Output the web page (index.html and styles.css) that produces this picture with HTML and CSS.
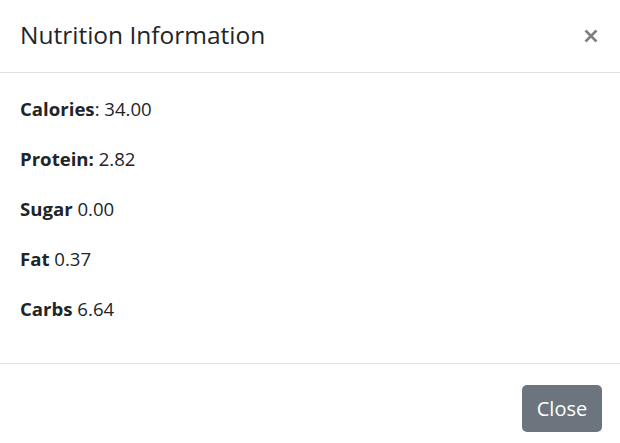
FILE: index.html
```html
<!DOCTYPE html>
<html>
<head>
<meta charset="utf-8">
<link rel="stylesheet" href="styles.css">
</head>
<body>
<div class="modal">
  <div class="modal-header">
    <h5 class="modal-title">Nutrition Information</h5>
    <button class="close" aria-label="Close">
      <svg width="14" height="14" viewBox="0 0 14 14"><path d="M1.5 1.5 L12.5 12.5 M12.5 1.5 L1.5 12.5" stroke="#808080" stroke-width="2.6" stroke-linecap="butt"/></svg>
    </button>
  </div>
  <div class="modal-body">
    <p><b>Calories</b>: 34.00</p>
    <p><b>Protein:</b> 2.82</p>
    <p><b>Sugar</b> 0.00</p>
    <p><b>Fat</b> 0.37</p>
    <p><b>Carbs</b> 6.64</p>
  </div>
  <div class="modal-footer">
    <button class="btn">Close</button>
  </div>
</div>
</body>
</html>
```
FILE: styles.css
```css
html, body {
  margin: 0;
  background: #fff;
}
body {
  font-family: "Open Sans", "Noto Sans", sans-serif;
  color: #212529;
  font-size: 18.6px;
  line-height: 30px;
}
.modal-header {
  height: 73px;
  box-sizing: border-box;
  padding: 0 20px;
  display: flex;
  align-items: center;
  justify-content: space-between;
  border-bottom: 1px solid #dee2e6;
}
.modal-title {
  margin: 0;
  font-size: 24.5px;
  font-weight: 500;
  line-height: 30px;
  position: relative;
  top: -1px;
}
.close {
  background: none;
  border: 0;
  padding: 0;
  margin-right: 2px;
  display: flex;
  cursor: pointer;
}
.modal-body {
  padding: 21px 20px 19px;
}
.modal-body p {
  margin: 0 0 20px;
}
.modal-body::after {
  content: "";
  display: block;
  height: 0.02px;
}
.modal-body b {
  font-weight: 700;
}
.modal-footer {
  border-top: 1px solid #dee2e6;
  display: flex;
  justify-content: flex-end;
  padding: 21px 18px 11px;
}
.btn {
  width: 80px;
  height: 47px;
  background: #6c757d;
  color: #fff;
  border: 0;
  border-radius: 5px;
  font-family: inherit;
  font-size: 20px;
  padding: 0;
}
```
